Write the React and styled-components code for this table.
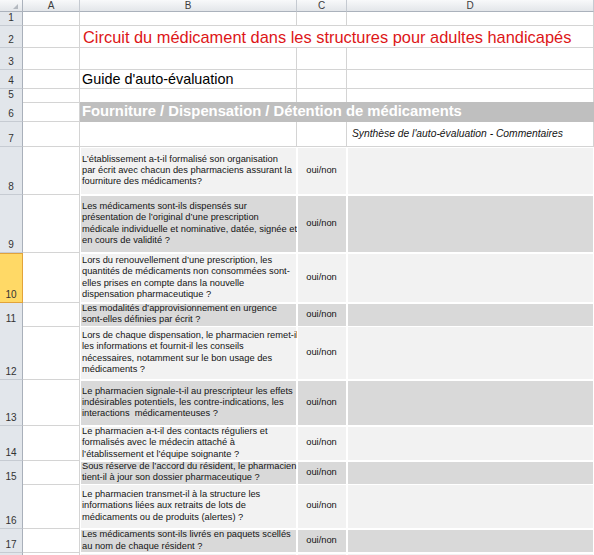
import React from 'react';
import styled, { createGlobalStyle } from 'styled-components';

const GlobalStyle = createGlobalStyle`
  html, body {
    margin: 0;
    padding: 0;
    background: #fff;
  }
  body {
    font-family: 'Liberation Sans', Arial, sans-serif;
  }
`;

const COLS = '23px 57px 217px 50px 1fr';
const GRID = '#d4d4d4';

const Sheet = styled.div`
  width: 594px;
  height: 555px;
  overflow: hidden;
  background: #fff;
`;

const Row = styled.div`
  display: grid;
  grid-template-columns: ${COLS};
  height: ${(p) => p.$h}px;
`;

const Corner = styled.div`
  display: flex;
  align-items: flex-end;
  justify-content: flex-end;
  padding: 0 4px 2px 0;
  background: linear-gradient(#f8f9fa, #e3e6ea);
  border-right: 1px solid #abb2bc;
  border-bottom: 1px solid #abb2bc;
`;

const ColHead = styled.div`
  display: flex;
  align-items: center;
  justify-content: center;
  background: linear-gradient(#f8f9fa, #e3e6ea);
  border-right: 1px solid #c5cad1;
  border-bottom: 1px solid #abb2bc;
  font-size: 10px;
  line-height: 11px;
  color: #3c3c3c;
`;

const RowHead = styled.div`
  display: flex;
  align-items: flex-end;
  justify-content: center;
  padding-bottom: 1px;
  background: ${(p) => (p.$active ? '#ffd966' : '#e2e6eb')};
  border-right: 1px solid ${(p) => (p.$active ? '#e2a33a' : '#a9b0ba')};
  border-bottom: 1px solid ${(p) => (p.$active ? '#e2a33a' : '#c6cbd2')};
  box-shadow: ${(p) => (p.$active ? 'inset 0 1px 0 #e2a33a' : 'none')};
  font-size: 10px;
  line-height: 12px;
  color: #333;
`;

const Cell = styled.div`
  display: flex;
  align-items: ${(p) => p.$valign || 'center'};
  justify-content: ${(p) => (p.$center ? 'center' : 'flex-start')};
  grid-column: ${(p) => (p.$span ? `span ${p.$span}` : 'auto')};
  padding-left: ${(p) => (p.$center ? 0 : 2)}px;
  min-width: 0;
  white-space: nowrap;
  background: ${(p) => p.$fill || 'transparent'};
  border-right: 1px solid ${(p) => (p.$fill ? '#fff' : GRID)};
  border-bottom: 1px solid ${(p) => (p.$fill ? '#fff' : GRID)};
  box-shadow: ${(p) => (p.$fill ? 'inset 1px 1px 0 #fff' : 'none')};
  font-size: 9.3px;
  line-height: 11.3px;
  color: #141414;
`;

const Title = styled(Cell)`
  padding-left: 3px;
  font-size: 16.4px;
  line-height: 19px;
  color: #dd1618;
`;

const Subtitle = styled(Cell)`
  font-size: 14.4px;
  line-height: 17px;
  color: #000;
`;

const Band = styled.div`
  grid-column: 3 / -1;
  display: flex;
  align-items: center;
  padding-left: 2px;
  background: #bfbfbf;
  border-bottom: 1px solid #bfbfbf;
  color: #fff;
  font-weight: bold;
  font-size: 14.8px;
  line-height: 17px;
  white-space: nowrap;
`;

const Note = styled(Cell)`
  padding-left: 5px;
  font-style: italic;
  font-size: 10.3px;
`;

const rows = [
  {
    n: 8,
    h: 48,
    fill: '#f2f2f2',
    lines: [
      'L’établissement a-t-il formalisé son organisation',
      'par écrit avec chacun des pharmaciens assurant la',
      'fourniture des médicaments?',
    ],
  },
  {
    n: 9,
    h: 58,
    fill: '#d9d9d9',
    lines: [
      'Les médicaments sont-ils dispensés sur',
      'présentation de l’original d’une prescription',
      'médicale individuelle et nominative, datée, signée et',
      'en cours de validité ?',
    ],
  },
  {
    n: 10,
    h: 50,
    fill: '#f2f2f2',
    active: true,
    lines: [
      'Lors du renouvellement d’une prescription, les',
      'quantités de médicaments non consommées sont-',
      'elles prises en compte dans la nouvelle',
      'dispensation pharmaceutique ?',
    ],
  },
  {
    n: 11,
    h: 23,
    fill: '#d9d9d9',
    lines: [
      'Les modalités d’approvisionnement en urgence',
      'sont-elles définies par écrit ?',
    ],
  },
  {
    n: 12,
    h: 54,
    fill: '#f2f2f2',
    lines: [
      'Lors de chaque dispensation, le pharmacien remet-il',
      'les informations et fournit-il les conseils',
      'nécessaires, notamment sur le bon usage des',
      'médicaments ?',
    ],
  },
  {
    n: 13,
    h: 46,
    fill: '#d9d9d9',
    lines: [
      'Le pharmacien signale-t-il au prescripteur les effets',
      'indésirables potentiels, les contre-indications, les',
      'interactions\u00a0 médicamenteuses ?',
    ],
  },
  {
    n: 14,
    h: 35,
    fill: '#f2f2f2',
    lines: [
      'Le pharmacien a-t-il des contacts réguliers et',
      'formalisés avec le médecin attaché à',
      'l’établissement et l’équipe soignante ?',
    ],
  },
  {
    n: 15,
    h: 23,
    fill: '#d9d9d9',
    lines: [
      'Sous réserve de l’accord du résident, le pharmacien',
      'tient-il à jour son dossier pharmaceutique ?',
    ],
  },
  {
    n: 16,
    h: 45,
    fill: '#f2f2f2',
    lines: [
      'Le pharmacien transmet-il à la structure les',
      'informations liées aux retraits de lots de',
      'médicaments ou de produits (alertes) ?',
    ],
  },
  {
    n: 17,
    h: 24,
    fill: '#d9d9d9',
    lines: [
      'Les médicaments sont-ils livrés en paquets scellés',
      'au nom de chaque résident ?',
    ],
  },
];

function Lines({ lines }) {
  return (
    <span>
      {lines.map((l, i) => (
        <React.Fragment key={i}>
          {l}
          {i < lines.length - 1 && <br />}
        </React.Fragment>
      ))}
    </span>
  );
}

function Empty({ n, h }) {
  return (
    <Row $h={h}>
      <RowHead>{n}</RowHead>
      <Cell />
      <Cell />
      <Cell />
      <Cell />
    </Row>
  );
}

export default function App() {
  return (
    <Sheet>
      <GlobalStyle />

      <Row $h={12}>
        <Corner>
          <svg width="5" height="5" viewBox="0 0 5 5">
            <polygon points="5,0 5,5 0,5" fill="#b4b9c0" />
          </svg>
        </Corner>
        <ColHead>A</ColHead>
        <ColHead>B</ColHead>
        <ColHead>C</ColHead>
        <ColHead>D</ColHead>
      </Row>

      <Empty n={1} h={14} />

      <Row $h={22}>
        <RowHead>2</RowHead>
        <Cell />
        <Title $span={3} $valign="flex-end">
          Circuit du médicament dans les structures pour adultes handicapés
        </Title>
      </Row>

      <Empty n={3} h={22} />

      <Row $h={19}>
        <RowHead>4</RowHead>
        <Cell />
        <Subtitle $valign="flex-end">Guide d'auto-évaluation</Subtitle>
        <Cell />
        <Cell />
      </Row>

      <Empty n={5} h={13} />

      <Row $h={20}>
        <RowHead>6</RowHead>
        <Cell />
        <Band>Fourniture / Dispensation / Détention de médicaments</Band>
      </Row>

      <Row $h={25}>
        <RowHead>7</RowHead>
        <Cell />
        <Cell />
        <Cell />
        <Note>Synthèse de l'auto-évaluation - Commentaires</Note>
      </Row>

      {rows.map((r) => (
        <Row key={r.n} $h={r.h}>
          <RowHead $active={r.active}>{r.n}</RowHead>
          <Cell />
          <Cell $fill={r.fill}>
            <Lines lines={r.lines} />
          </Cell>
          <Cell $fill={r.fill} $center>
            oui/non
          </Cell>
          <Cell $fill={r.fill} />
        </Row>
      ))}

      {/* row 18 only peeks in at the bottom edge */}
      <Row $h={20}>
        <RowHead />
        <Cell />
        <Cell $fill="#f2f2f2" />
        <Cell $fill="#f2f2f2" />
        <Cell $fill="#f2f2f2" />
      </Row>
    </Sheet>
  );
}
